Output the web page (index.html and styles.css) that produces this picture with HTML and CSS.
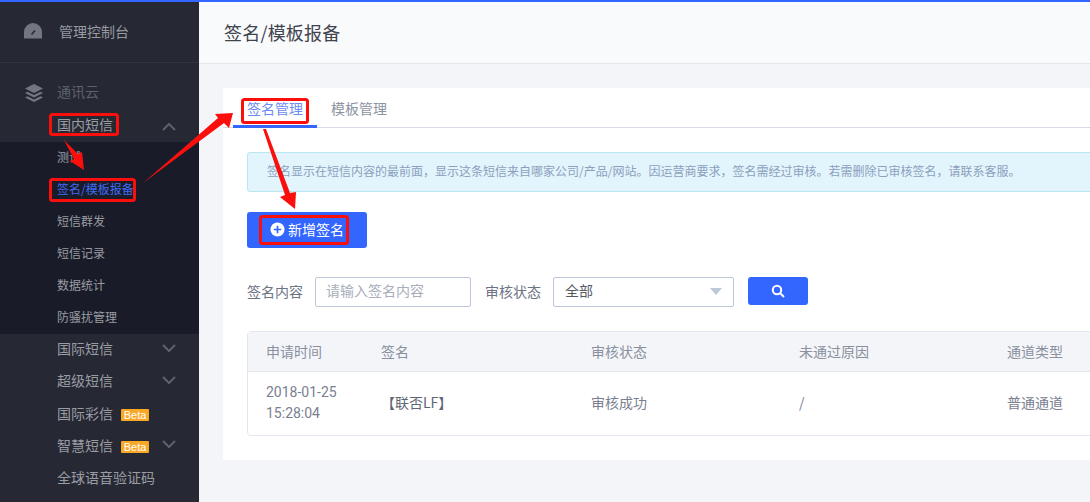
FILE: index.html
```html
<!DOCTYPE html>
<html lang="zh-CN">
<head>
<meta charset="utf-8">
<title>签名/模板报备</title>
<link rel="stylesheet" href="styles.css">
</head>
<body>
<div class="app">
  <aside class="sidebar">
    <div class="dash">
      <svg class="side-icon" viewBox="0 0 20 20" width="20" height="20"><path d="M1 16.500V10a9 9 0 0 1 18 0v6.500z" fill="#74767f"/><path d="M8.500 12.500l3.500-4" stroke="#262833" stroke-width="1.500"/></svg>
      <span>管理控制台</span>
    </div>
    <div class="group-title">
      <svg class="side-icon" viewBox="0 0 20 20" width="20" height="20"><path d="M10 1l9 4.500-9 4.500-9-4.500z" fill="#74767f"/><path d="M1 10l2.500-1.200 6.500 3.200 6.500-3.200L19 10l-9 4.500zM1 14.500l2.500-1.200 6.500 3.200 6.500-3.200 2.500 1.200-9 4.500z" fill="#74767f"/></svg>
      <span>通讯云</span>
    </div>
    <div class="item raise open">国内短信<svg class="chev" viewBox="0 0 14 8" width="14" height="8"><path d="M1 7l6-6 6 6"/></svg></div>
    <div class="submenu">
      <div class="sub">测试</div>
      <div class="sub active">签名/模板报备</div>
      <div class="sub">短信群发</div>
      <div class="sub">短信记录</div>
      <div class="sub">数据统计</div>
      <div class="sub">防骚扰管理</div>
    </div>
    <div class="item raise">国际短信<svg class="chev" viewBox="0 0 14 8" width="14" height="8"><path d="M1 1l6 6 6-6"/></svg></div>
    <div class="item raise">超级短信<svg class="chev" viewBox="0 0 14 8" width="14" height="8"><path d="M1 1l6 6 6-6"/></svg></div>
    <div class="item">国际彩信<span class="beta">Beta</span></div>
    <div class="item">智慧短信<span class="beta">Beta</span><svg class="chev" viewBox="0 0 14 8" width="14" height="8"><path d="M1 1l6 6 6-6"/></svg></div>
    <div class="item">全球语音验证码</div>
  </aside>
  <main class="main">
    <header class="header">签名/模板报备</header>
    <section class="card">
      <nav class="tabs">
        <div class="tab current">签名管理</div>
        <div class="tab">模板管理</div>
      </nav>
      <div class="body">
        <div class="alert">签名显示在短信内容的最前面，显示这条短信来自哪家公司/产品/网站。因运营商要求，签名需经过审核。若需删除已审核签名，请联系客服。</div>
        <button class="add"><svg viewBox="0 0 16 16" width="15" height="15"><circle cx="8" cy="8" r="7.500" fill="#fff"/><path d="M8 4v8M4 8h8" stroke="#3366ff" stroke-width="1.800"/></svg>新增签名</button>
        <div class="filters">
          <label class="lbl">签名内容</label>
          <div class="input">请输入签名内容</div>
          <label class="lbl">审核状态</label>
          <div class="select">全部<span class="caret"></span></div>
          <button class="search"><svg viewBox="0 0 14 14" width="14" height="14"><circle cx="6" cy="6" r="4.200" fill="none" stroke="#fff" stroke-width="2"/><path d="M9 9l4 4" stroke="#fff" stroke-width="2"/></svg></button>
        </div>
        <div class="table">
          <div class="row head">
            <div>申请时间</div><div>签名</div><div>审核状态</div><div>未通过原因</div><div>通道类型</div>
          </div>
          <div class="row data">
            <div class="time">2018-01-25<br>15:28:04</div><div class="sign">【联否LF】</div><div>审核成功</div><div>/</div><div>普通通道</div>
          </div>
        </div>
      </div>
    </section>
  </main>
</div>
<svg class="notes" viewBox="0 0 1090 502" width="1090" height="502">
  <g fill="none" stroke="#fb0f0c" stroke-width="3">
    <rect x="50.500" y="114.500" width="67" height="20" rx="2"/>
    <rect x="50.500" y="179.500" width="84" height="21" rx="2"/>
    <rect x="242.500" y="99.500" width="65" height="23" rx="2"/>
    <rect x="260.500" y="216.500" width="87" height="27" rx="2"/>
  </g>
  <g fill="#fb0f0c">
    <path d="M64 140L78 154 82 152 84 170 70 161 74 159z"/>
    <path d="M143 183L218 118 215 114 233 113 229 128 224 123z"/>
    <path d="M263 129L266 129 290 193 296 192 295 209 280 197 285 195z"/>
  </g>
</svg>
</body>
</html>
```
FILE: styles.css
```css
* { box-sizing: border-box; }
html, body { margin: 0; height: 100%; }
body {
  width: 1090px;
  height: 502px;
  overflow: hidden;
  position: relative;
  font-family: "Noto Sans CJK SC", "Noto Sans", sans-serif;
  font-size: 14px;
  color: #6c7383;
}
.app {
  display: flex;
  height: 502px;
  border-top: 2px solid #3366ff;
}
.sidebar {
  width: 199px;
  flex: none;
  background: #262833;
  color: #9a9ca4;
  overflow: hidden;
}
.dash {
  height: 61px;
  border-bottom: 1px solid #31333e;
  display: flex;
  align-items: center;
  padding-left: 23px;
  gap: 16px;
  color: #989aa2;
}
.dash span { margin-bottom: 2px; }
.group-title {
  height: 47px;
  display: flex;
  align-items: center;
  padding: 12px 0 0 24px;
  gap: 13px;
  color: #5f616b;
}
.group-title span { margin-bottom: 4px; }
.side-icon { flex: none; }
.item {
  height: 32px;
  display: flex;
  align-items: center;
  padding: 0 0 2px 57px;
  position: relative;
}
.item.raise { padding-bottom: 4px; }
.chev {
  position: absolute;
  left: 162px;
  top: 10px;
  fill: none;
  stroke: #5f616b;
  stroke-width: 2;
}
.open .chev { top: 13px; }
.submenu { background: #191c28; font-size: 12px; }
.sub {
  height: 32px;
  display: flex;
  align-items: center;
  padding: 0 0 4px 57px;
}
.sub.active { color: #3f6af5; }
.beta {
  background: #f9a825;
  color: #fff;
  font-family: "Liberation Sans", sans-serif;
  font-size: 11px;
  height: 12px;
  line-height: 12px;
  width: 28px;
  text-align: center;
  border-radius: 1px;
  margin: 4px 0 0 8px;
}
.main {
  flex: 1;
  min-width: 0;
  background: #f3f5f9;
  overflow: hidden;
}
.header {
  height: 62px;
  background: #f9fafc;
  border-bottom: 1px solid #e4e6ed;
  color: #40434d;
  font-size: 18px;
  letter-spacing: 0.2px;
  padding: 0 0 2px 25px;
  display: flex;
  align-items: center;
}
.card {
  margin: 24px 0 0 24px;
  width: 1000px;
  height: 372px;
  background: #fff;
}
.tabs {
  height: 40px;
  border-bottom: 1px solid #d6dbe6;
  padding-left: 10px;
  display: flex;
}
.tab {
  width: 84px;
  height: 40px;
  display: flex;
  align-items: center;
  justify-content: center;
  color: #8d93a1;
}
.tab.current {
  color: #6f8cf5;
  border-bottom: 3px solid #3366ff;
  padding-top: 2px;
}
.body { padding: 24px 0 0 24px; }
.alert {
  height: 40px;
  background: #e2f4fc;
  border: 1px solid #b8e6f2;
  border-radius: 3px;
  padding-left: 19px;
  font-size: 12px;
  line-height: 35px;
  color: #8ba0bc;
  white-space: nowrap;
}
.add {
  display: flex;
  align-items: center;
  justify-content: center;
  gap: 3px;
  width: 120px;
  height: 36px;
  margin-top: 20px;
  background: #3366ff;
  border: 0;
  border-radius: 3px;
  color: #fff;
  font: inherit;
  padding: 0 0 2px;
}
.filters {
  display: flex;
  align-items: center;
  height: 30px;
  margin-top: 29px;
}
.lbl { color: #6c7383; margin-bottom: 2px; }
.input {
  width: 156px;
  height: 30px;
  margin: 0 15px 0 12px;
  border: 1px solid #bcc8d8;
  border-radius: 2px;
  padding-left: 10px;
  line-height: 25px;
  color: #a8aebb;
}
.select {
  width: 181px;
  height: 30px;
  margin-left: 12px;
  border: 1px solid #bcc8d8;
  border-radius: 2px;
  padding-left: 11px;
  line-height: 25px;
  color: #555a66;
  position: relative;
}
.input + .lbl { margin-left: -1px; }
.caret {
  position: absolute;
  right: 11px;
  top: 10px;
  border-left: 6px solid transparent;
  border-right: 6px solid transparent;
  border-top: 7px solid #bcc8d8;
}
.search {
  width: 60px;
  height: 28px;
  margin: -2px 0 0 14px;
  background: #3366ff;
  border: 0;
  border-radius: 3px;
  padding: 3px 0 0;
}
.table {
  margin-top: 24px;
  border: 1px solid #e3e7f0;
  border-radius: 4px;
  width: 960px;
}
.row {
  display: grid;
  grid-template-columns: 115px 210px 208px 208px 1fr;
  padding-left: 18px;
  align-items: center;
}
.head {
  height: 40px;
  background: #f3f5f9;
  border-bottom: 1px solid #e3e7f0;
  color: #8a909e;
  padding-bottom: 2px;
}
.data { height: 63px; color: #7a8090; padding-bottom: 4px; }
.time { line-height: 21px; margin-top: 2px; font-family: Roboto, "Noto Sans CJK SC", sans-serif; }
.sign { color: #5f6573; }
.notes {
  position: absolute;
  left: 0;
  top: 0;
  pointer-events: none;
}
```
